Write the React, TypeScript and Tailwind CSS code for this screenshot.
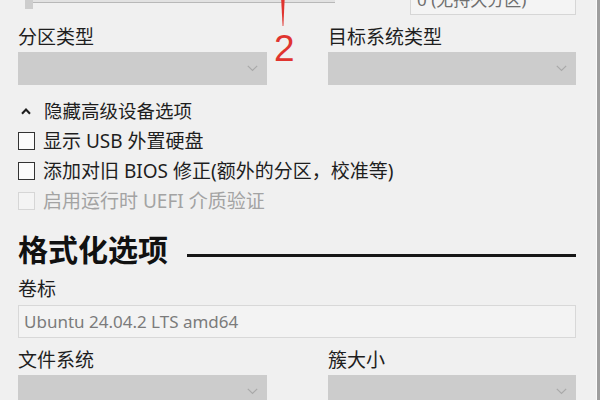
import React from "react";

const FONT = "font-['Noto_Sans','Noto_Sans_CJK_SC',sans-serif]";

function Chevron() {
  return (
    <svg width="11" height="7" viewBox="0 0 11 7" fill="none">
      <polyline points="0.8,0.8 5.5,5.5 10.2,0.8" stroke="#a9a9a9" strokeWidth="1.2" />
    </svg>
  );
}

function Select() {
  return (
    <div className="h-[33px] bg-[#cccccc] flex items-center justify-end pr-[9px]">
      <Chevron />
    </div>
  );
}

function Check({ label, disabled }: { label: string; disabled?: boolean }) {
  return (
    <div className="h-[30px] flex items-center">
      <div
        className={
          disabled
            ? "w-[17px] h-[18px] border-[1.5px] border-[#d6d6d6] bg-[#f4f4f4]"
            : "w-[17px] h-[18px] border-[1.5px] border-[#333333] bg-[#fbfbfb]"
        }
      />
      <span
        className={
          disabled
            ? "ml-[8px] text-[19px] leading-[30px] text-[#a3a3a3]"
            : "ml-[8px] text-[19px] leading-[30px] text-[#1e1e1e]"
        }
      >
        {label}
      </span>
    </div>
  );
}

export default function App() {
  return (
    <div className={"w-[600px] h-[400px] overflow-hidden bg-[#f0f0f0] flex " + FONT}>
      <div className="flex-1 relative pl-[18px] pr-[20px]">
        {/* top row (clipped) */}
        <div className="h-[15px] flex overflow-hidden">
          <div className="ml-[7px] w-[310px] flex items-start">
            <div className="w-[8px] h-[9px] bg-[#cdcdcd]" />
            <div className="flex-1 h-[3px] bg-[#e2e2e2] border-b border-[#b8b8b8]" />
          </div>
          <div className="ml-auto w-[166px] h-[32px] -mt-[17px] border border-[#d6d6d6] bg-[#f4f4f4] flex items-center pl-[6px] text-[17px] leading-none text-[#6e6e6e] whitespace-nowrap">
            0 (无持久分区)
          </div>
        </div>

        {/* partition / target */}
        <div className="mt-[10px] grid grid-cols-[249px_248px] gap-x-[61px]">
          <div className="text-[19px] leading-[24px] text-[#1e1e1e]">分区类型</div>
          <div className="text-[19px] leading-[24px] text-[#1e1e1e]">目标系统类型</div>
        </div>
        <div className="mt-[3px] grid grid-cols-[249px_248px] gap-x-[61px]">
          <Select />
          <Select />
        </div>

        {/* advanced */}
        <div className="mt-[11px] h-[30px] flex items-center">
          <svg className="ml-[3px]" width="10" height="7" viewBox="0 0 10 7" fill="none">
            <polyline points="1,5.8 5,1.6 9,5.8" stroke="#1e1e1e" strokeWidth="2.1" />
          </svg>
          <span className="ml-[13px] text-[18.5px] leading-[30px] text-[#1e1e1e]">隐藏高级设备选项</span>
        </div>
        <Check label="显示 USB 外置硬盘" />
        <Check label="添加对旧 BIOS 修正(额外的分区，校准等)" />
        <Check label="启用运行时 UEFI 介质验证" disabled />

        {/* format options heading */}
        <div className="mt-[14px] h-[40px] flex items-center">
          <span className="text-[30px] font-bold leading-[40px] text-[#111111]">格式化选项</span>
          <div className="flex-1 ml-[19px] mt-[11px] h-[3px] bg-[#161616]" />
        </div>

        <div className="mt-[7px] text-[19px] leading-[24px] text-[#1e1e1e]">卷标</div>
        <div className="mt-[4px] h-[33px] border border-[#d8d8d8] bg-[#f3f3f3] flex items-center pl-[5px] text-[17px] leading-none text-[#7b7b7b]">
          Ubuntu 24.04.2 LTS amd64
        </div>

        <div className="mt-[10px] grid grid-cols-[249px_248px] gap-x-[61px]">
          <div className="text-[19px] leading-[24px] text-[#1e1e1e]">文件系统</div>
          <div className="text-[19px] leading-[24px] text-[#1e1e1e]">簇大小</div>
        </div>
        <div className="mt-[3px] grid grid-cols-[249px_248px] gap-x-[61px]">
          <Select />
          <Select />
        </div>

        {/* red annotation overlay */}
        <svg className="absolute left-[280px] top-0" width="6" height="27" viewBox="0 0 6 27">
          <polygon points="1.2,0 4.6,0 3.4,26 2.6,26" fill="#e0342f" />
        </svg>
        <div className="absolute left-[274px] top-[30px] text-[37px] leading-[37px] text-[#e0342f] font-['Liberation_Sans',Arial,sans-serif]">
          2
        </div>
      </div>
      <div className="w-[1px] bg-[#fbfbfb]" />
      <div className="w-[3px] bg-[#9e9e9e]" />
    </div>
  );
}
